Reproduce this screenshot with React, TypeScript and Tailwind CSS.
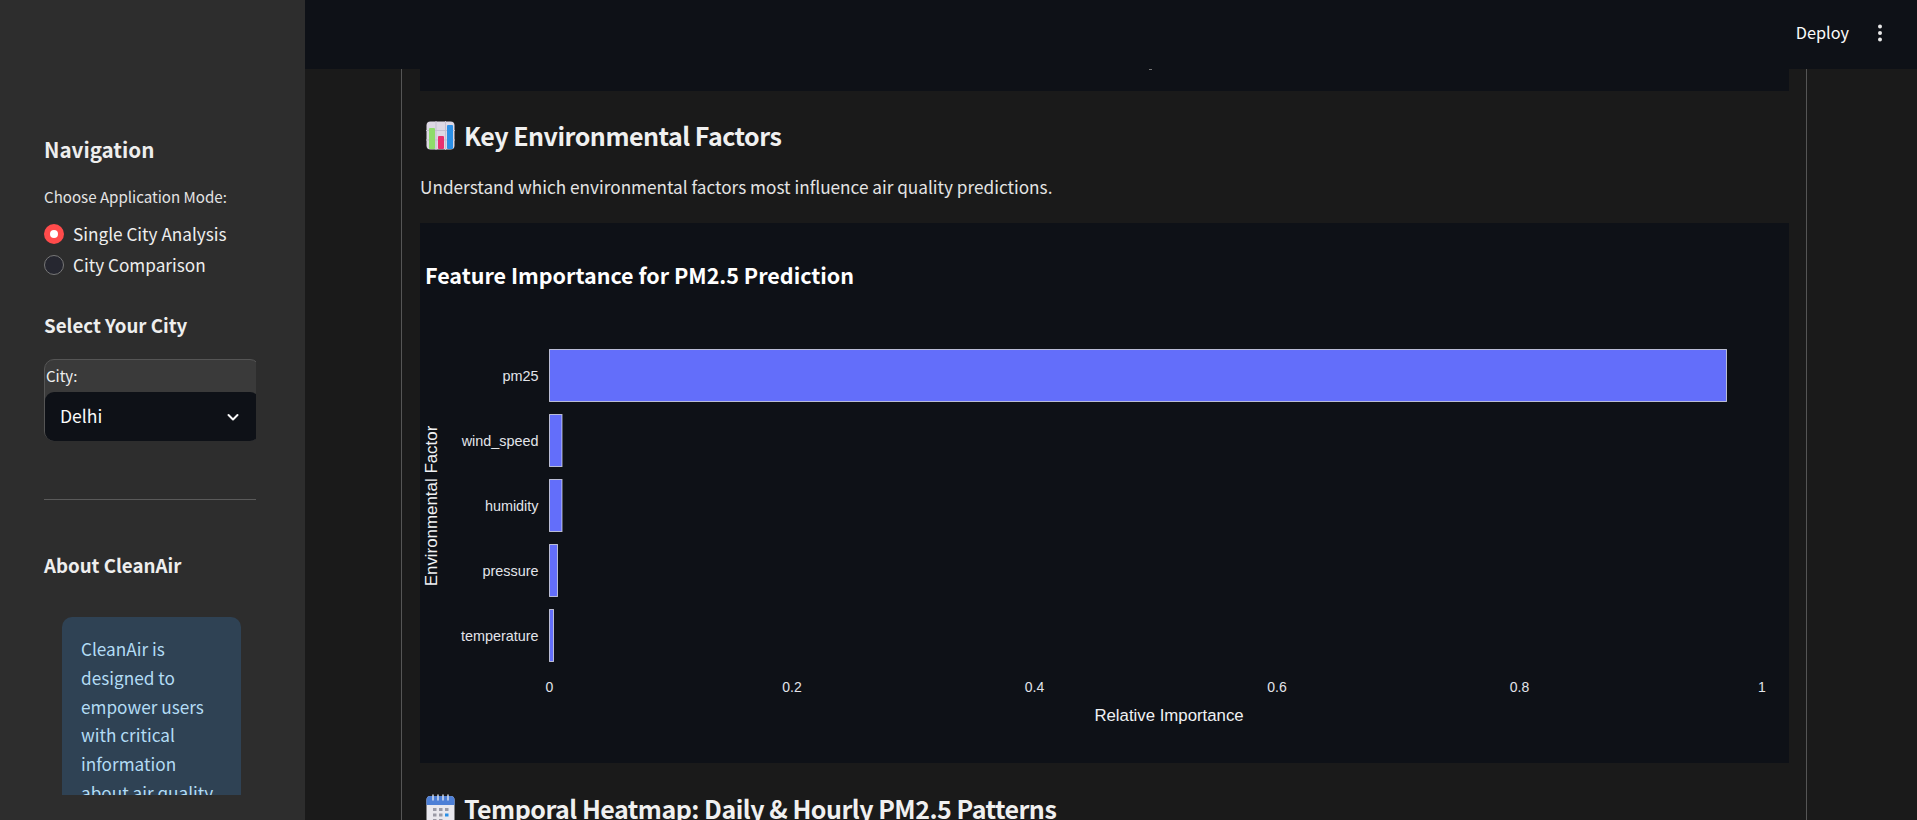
const sans = "font-['Noto_Sans_CJK_SC','Noto_Sans',sans-serif]";

const bars = [
  { name: 'pm25', y: 349.5, w: 1177 },
  { name: 'wind_speed', y: 414.5, w: 12.5 },
  { name: 'humidity', y: 479.5, w: 12.5 },
  { name: 'pressure', y: 544.5, w: 8 },
  { name: 'temperature', y: 609.5, w: 4 },
];

const ticks = ['0', '0.2', '0.4', '0.6', '0.8', '1'];

function ChartEmoji() {
  return (
    <svg width="29" height="29" viewBox="0 0 29 29" className="shrink-0">
      <rect x="0.5" y="0.5" width="28" height="28" rx="4" fill="#ddd8e4" />
      <path d="M0 9.5H29M0 19H29M10 0V29M19.5 0V29" stroke="#c5bfd0" strokeWidth="1" />
      <rect x="3" y="7" width="6" height="21" rx="1" fill="#8fdc6a" />
      <rect x="12" y="15" width="6" height="13" rx="1" fill="#e8306f" />
      <rect x="21" y="4" width="6" height="24" rx="1" fill="#2b8fe6" />
    </svg>
  );
}

function CalendarEmoji() {
  return (
    <svg width="29" height="29" viewBox="0 0 29 29" className="shrink-0">
      <rect x="0.5" y="2" width="28" height="27" rx="4" fill="#e9e8ee" />
      <path d="M0.5 6a4 4 0 0 1 4-4h20a4 4 0 0 1 4 4v5h-28z" fill="#4d7fd6" />
      <path d="M7 1v5M12 1v5M17 1v5M22 1v5" stroke="#dfe3ef" strokeWidth="1.4" strokeLinecap="round" />
      <path d="M7 14h3.500v3H7zM13 14h3.500v3H13zM19 14h3.500v3H19zM7 19.500h3.500v3H7zM13 19.500h3.500v3H13zM7 25h3.500v2H7zM13 25h3.500v2H13z" fill="#9a9aa6" />
      <rect x="19" y="19.500" width="3.500" height="3" fill="#2b8fe6" />
    </svg>
  );
}

function FeatureChart() {
  return (
    <svg width="1368" height="540" viewBox="420 223 1368 540" className="block">
      <text x="425" y="284" fill="#ffffff" fontSize="21.500" fontWeight="700" fontFamily="'Noto Sans CJK SC', sans-serif">
        Feature Importance for PM2.5 Prediction
      </text>
      {bars.map((b) => (
        <g key={b.name}>
          <rect x="549.5" y={b.y} width={b.w} height="52" fill="#636efa" stroke="#ffffff" strokeOpacity="0.65" strokeWidth="1" />
          <text x="538.500" y={b.y + 31} textAnchor="end" fill="#e2e4ea" fontSize="14.400" fontFamily="'Liberation Sans', sans-serif">
            {b.name}
          </text>
        </g>
      ))}
      {ticks.map((t, i) => (
        <text key={t} x={549.5 + i * 242.5} y="692" textAnchor="middle" fill="#e2e4ea" fontSize="14" fontFamily="'Liberation Sans', sans-serif">
          {t}
        </text>
      ))}
      <text x="1169" y="721" textAnchor="middle" fill="#f0f1f4" fontSize="16.800" fontFamily="'Liberation Sans', sans-serif">
        Relative Importance
      </text>
      <text transform="translate(437 506) rotate(-90)" textAnchor="middle" fill="#f0f1f4" fontSize="16.900" fontFamily="'Liberation Sans', sans-serif">
        Environmental Factor
      </text>
    </svg>
  );
}

function Sidebar() {
  return (
    <aside className="w-[305px] h-screen shrink-0 bg-[#2d2d2d] text-[#eeeeee]">
      <div className="h-[795px] w-[256px] overflow-hidden pt-[134px] pl-11">
        <h2 className="text-[20.6px] leading-[30px] font-semibold">Navigation</h2>
        <p className="mt-[20px] text-[15.1px] leading-6 text-[#e4e4e4]">Choose Application Mode:</p>
        <div className="mt-[10px] flex items-center gap-[9px] h-[31px]">
          <span className="w-5 h-5 rounded-full bg-[#ff4b4b] flex items-center justify-center">
            <span className="w-2 h-2 rounded-full bg-white" />
          </span>
          <span className="text-[17.2px]">Single City Analysis</span>
        </div>
        <div className="flex items-center gap-[9px] h-[31px]">
          <span className="w-5 h-5 rounded-full bg-[#262730] border border-[#777]" />
          <span className="text-[17.2px]">City Comparison</span>
        </div>
        <h2 className="mt-[31px] text-[18.7px] leading-7 font-semibold">Select Your City</h2>
        <div className="mt-[20px] h-[82px] w-[212px] overflow-hidden">
          <div className="w-[216px] h-[82px] rounded-[10px] bg-[#3a3a3a] border border-[#555]">
            <p className="pl-[1px] text-[15px] leading-[32px]">City:</p>
            <div className="h-[49px] bg-[#0e1117] rounded-[9px] w-[214px]">
              <div className="w-[210px] h-full flex items-center justify-between pl-[15px] pr-[14px] text-[#fafafa] text-[17.6px]">
                <span>Delhi</span>
                <svg width="16" height="16" viewBox="0 0 16 16" fill="none">
                  <path d="M3.500 6l4.500 4.500L12.500 6" stroke="#fafafa" strokeWidth="2" strokeLinecap="round" strokeLinejoin="round" />
                </svg>
              </div>
            </div>
          </div>
        </div>
        <hr className="mt-[58px] w-[212px] border-t border-[#5a5a5a]" />
        <h2 className="mt-[51px] text-[18.7px] leading-7 font-semibold">About CleanAir</h2>
        <div className="mt-[38px] ml-[18px] w-[179px] h-[300px] rounded-[10px] bg-[#2f4254] pl-[19px] pr-5 pt-[18px] text-[17.2px] leading-[28.8px] text-[#b3dcf5]">
          CleanAir is designed to empower users with critical information about air quality
        </div>
      </div>
    </aside>
  );
}

export default function App() {
  return (
    <div className={`flex h-screen overflow-hidden bg-[#1a1a1a] ${sans}`}>
      <Sidebar />
      <main className="flex-1 min-w-0 flex flex-col">
        <header className="h-[69px] shrink-0 bg-[#0e1117] flex items-center justify-end">
          <span className="text-[#fafafa] text-[16.3px] mr-[28px] -mt-1">Deploy</span>
          <svg width="6" height="20" viewBox="0 0 6 20" className="mr-[34px] -mt-[3px]">
            <circle cx="3" cy="3.500" r="2" fill="#e8e8e8" />
            <circle cx="3" cy="10" r="2" fill="#e8e8e8" />
            <circle cx="3" cy="16.500" r="2" fill="#e8e8e8" />
          </svg>
        </header>
        <div className="flex-1 min-h-0 overflow-hidden pl-[96px]">
          <div className="w-[1406px] h-full border-x border-[#555] pl-[18px] pr-[17px]">
            <div className="relative h-[22px] bg-[#0e1117]">
              <span className="absolute left-[729px] top-0 w-[3px] h-px bg-[#777]" />
            </div>
            <h2 className="mt-[30px] flex items-center gap-[9px] pl-[6px] h-[29px] text-[25px] tracking-[-0.02em] font-semibold text-[#f0f0f0]">
              <ChartEmoji />
              Key Environmental Factors
            </h2>
            <p className="mt-[23px] text-[17.2px] leading-7 text-[#e4e4e4]">
              Understand which environmental factors most influence air quality predictions.
            </p>
            <div className="mt-[22px] bg-[#0e1117]">
              <FeatureChart />
            </div>
            <h2 className="mt-[31px] flex items-center gap-[9px] pl-[6px] h-[29px] text-[25px] tracking-[-0.02em] font-semibold text-[#f0f0f0]">
              <CalendarEmoji />
              Temporal Heatmap: Daily &amp; Hourly PM2.5 Patterns
            </h2>
          </div>
        </div>
      </main>
    </div>
  );
}
